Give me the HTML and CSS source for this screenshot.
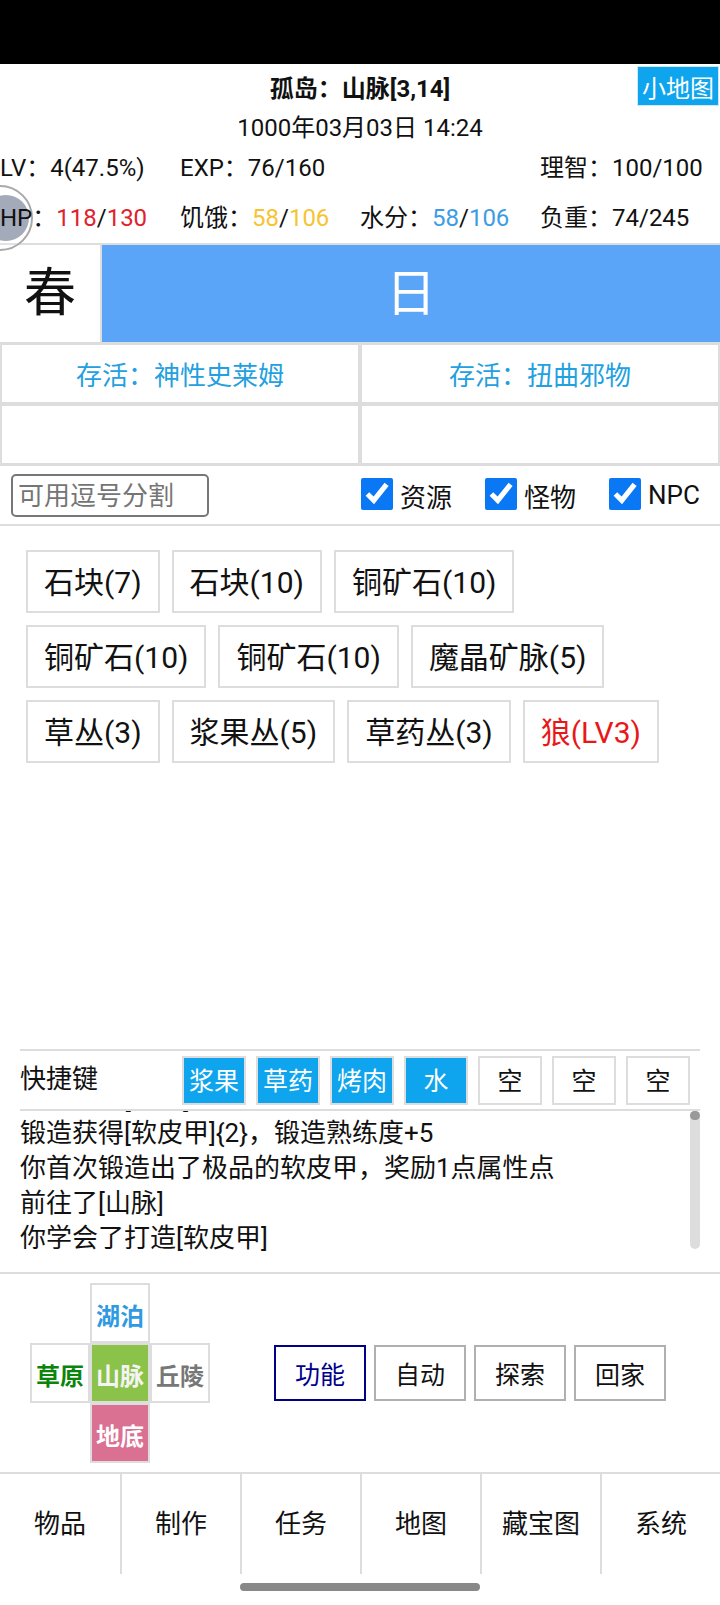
FILE: index.html
```html
<!DOCTYPE html>
<html lang="zh-CN">

<head>
    <meta charset="UTF-8">
    <meta name="viewport" content="width=device-width, initial-scale=1.0">
    <title>孤岛</title>
    <link rel="stylesheet" href="styles.css">
</head>

<body>
    <div class="status-bar"></div>

    <div class="info">
        <div class="float-ball"><div class="float-ball-inner"></div></div>
        <div class="title">孤岛：山脉[3,14]</div>
        <div class="date">1000年03月03日 14:24</div>
        <div class="stats">
            <span>LV：4(47.5%)</span>
            <span>EXP：76/160</span>
            <span></span>
            <span>理智：100/100</span>
        </div>
        <div class="stats">
            <span>HP：<b class="red">118</b>/<b class="red">130</b></span>
            <span>饥饿：<b class="yellow">58</b>/<b class="yellow">106</b></span>
            <span>水分：<b class="blue">58</b>/<b class="blue">106</b></span>
            <span>负重：74/245</span>
        </div>
        <button class="minimap">小地图</button>
    </div>

    <div class="season">
        <div class="season-name">春</div>
        <div class="season-time">日</div>
    </div>

    <div class="quests">
        <div class="quest">存活：神性史莱姆</div>
        <div class="quest">存活：扭曲邪物</div>
        <div class="quest"></div>
        <div class="quest"></div>
    </div>

    <div class="filter">
        <input class="filter-input" type="text" placeholder="可用逗号分割">
        <label class="check check-res"><input type="checkbox" checked>资源</label>
        <label class="check check-mon"><input type="checkbox" checked>怪物</label>
        <label class="check check-npc"><input type="checkbox" checked>NPC</label>
    </div>

    <div class="tags">
        <button class="tag">石块(7)</button>
        <button class="tag">石块(10)</button>
        <button class="tag">铜矿石(10)</button>
        <button class="tag">铜矿石(10)</button>
        <button class="tag">铜矿石(10)</button>
        <button class="tag">魔晶矿脉(5)</button>
        <button class="tag">草丛(3)</button>
        <button class="tag">浆果丛(5)</button>
        <button class="tag">草药丛(3)</button>
        <button class="tag tag-enemy">狼(LV3)</button>
    </div>

    <div class="quick">
        <div class="quick-label">快捷键</div>
        <button class="slot slot-on">浆果</button>
        <button class="slot slot-on">草药</button>
        <button class="slot slot-on">烤肉</button>
        <button class="slot slot-on">水</button>
        <button class="slot">空</button>
        <button class="slot">空</button>
        <button class="slot">空</button>
    </div>

    <div class="log">
        <div class="log-lines">
            <div class="log-old">你获得了[石块]</div>
            <div>锻造获得[软皮甲]{2}，锻造熟练度+5</div>
            <div>你首次锻造出了极品的软皮甲，奖励1点属性点</div>
            <div>前往了[山脉]</div>
            <div>你学会了打造[软皮甲]</div>
        </div>
        <div class="scroll-track"><div class="scroll-thumb"></div></div>
    </div>

    <div class="controls">
        <div class="cross">
            <div class="dir dir-lake">湖泊</div>
            <div class="dir dir-grass">草原</div>
            <div class="dir dir-here">山脉</div>
            <div class="dir dir-hill">丘陵</div>
            <div class="dir dir-under">地底</div>
        </div>
        <div class="actions">
            <button class="action action-on">功能</button>
            <button class="action">自动</button>
            <button class="action">探索</button>
            <button class="action">回家</button>
        </div>
    </div>

    <div class="tabs">
        <div class="tab">物品</div>
        <div class="tab">制作</div>
        <div class="tab">任务</div>
        <div class="tab">地图</div>
        <div class="tab">藏宝图</div>
        <div class="tab">系统</div>
    </div>

    <div class="home-area"><div class="home-pill"></div></div>
</body>

</html>
```

FILE: styles.css
```css
* {
    box-sizing: border-box;
}

html,
body {
    margin: 0;
    padding: 0;
}

body {
    width: 720px;
    height: 1605px;
    overflow: hidden;
    display: flex;
    flex-direction: column;
    background-color: #fff;
    color: #111;
    font-family: Roboto, "Noto Sans CJK SC", sans-serif;
    font-size: 24px;
}

button {
    font-family: inherit;
    padding: 0;
    background-color: #fff;
    color: #111;
}

.status-bar {
    height: 64px;
    background-color: #000;
}

/* top info block */
.info {
    position: relative;
    height: 179px;
}

.title {
    height: 48px;
    line-height: 50px;
    text-align: center;
    font-weight: 700;
}

.date {
    height: 31px;
    line-height: 33px;
    text-align: center;
}

.stats {
    position: relative;
    display: grid;
    grid-template-columns: repeat(4, 180px);
    height: 50px;
    line-height: 51px;
    white-space: nowrap;
}

.stats b {
    font-weight: 400;
}

.red {
    color: #e0222d;
}

.yellow {
    color: #f6c433;
}

.blue {
    color: #3c9de4;
}

.minimap {
    position: absolute;
    top: 2px;
    right: 1px;
    width: 82px;
    height: 40px;
    border: 1px solid #cfe9f7;
    background-color: #0ea5ee;
    color: #fff;
    font-size: 24px;
}

.float-ball {
    position: absolute;
    left: -33px;
    top: 121px;
    width: 66px;
    height: 66px;
    border: 2px solid #a9a9a9;
    border-radius: 50%;
    background-color: rgba(255, 255, 255, 0.2);
}

.float-ball-inner {
    position: absolute;
    left: 14px;
    top: 8px;
    width: 46px;
    height: 46px;
    border-radius: 50%;
    background-color: #a3abba;
}

/* season */
.season {
    display: flex;
    height: 99px;
    border-top: 2px solid #ddd;
}

.season-name {
    width: 102px;
    border-right: 2px solid #ddd;
    line-height: 98px;
    text-align: center;
    font-size: 52px;
}

.season-time {
    flex: 1;
    background-color: #5aa5f8;
    color: #fff;
    line-height: 98px;
    text-align: center;
    font-size: 50px;
}

/* quests */
.quests {
    display: grid;
    grid-template-columns: 356px 356px;
    grid-auto-rows: 57px;
    gap: 4px;
    height: 124px;
    padding: 3px 0 3px 2px;
    background-color: #ddd;
}

.quest {
    background-color: #fff;
    line-height: 62px;
    text-align: center;
    font-size: 26px;
    color: #22a0e0;
}

/* filter row */
.filter {
    display: flex;
    align-items: center;
    height: 60px;
    padding-left: 11px;
    border-bottom: 2px solid #ddd;
    font-size: 26px;
}

.filter-input {
    width: 198px;
    height: 43px;
    padding: 2px 5px 0;
    border: 2px solid #777;
    border-radius: 5px;
    font-family: inherit;
    font-size: 26px;
}

.filter-input::placeholder {
    color: #757575;
}

.check {
    display: flex;
    align-items: center;
    gap: 7px;
}

.check input {
    width: 32px;
    height: 32px;
    margin: 0 0 3px;
    accent-color: #0a78f5;
}

.check-res {
    margin-left: 152px;
}

.check-mon {
    margin-left: 33px;
}

.check-npc {
    margin-left: 33px;
}

/* gathered things */
.tags {
    flex: 1;
    display: flex;
    flex-wrap: wrap;
    align-content: flex-start;
    gap: 12px;
    padding: 24px 26px 0 26px;
}

.tag {
    height: 63px;
    padding: 0 16px 3px;
    border: 2px solid #ddd;
    font-size: 30px;
}

.tag-enemy {
    color: #e81818;
}

/* quick keys */
.quick {
    display: flex;
    align-items: center;
    gap: 10px;
    height: 62px;
    margin: 0 20px;
    padding-right: 10px;
    border-top: 2px solid #ddd;
    border-bottom: 2px solid #ddd;
}

.quick-label {
    width: 152px;
    padding-bottom: 8px;
    font-size: 26px;
}

.slot {
    width: 64px;
    height: 49px;
    padding-bottom: 3px;
    border: 2px solid #ddd;
    font-size: 25px;
}

.slot-on {
    background-color: #0ea5ee;
    color: #fff;
}

/* message log */
.log {
    position: relative;
    display: flex;
    flex-direction: column;
    justify-content: flex-end;
    height: 163px;
    padding: 0 0 16px 20px;
    overflow: hidden;
    border-bottom: 2px solid #ddd;
    font-size: 26px;
    line-height: 35px;
    white-space: nowrap;
}

/* older line, scrolled up so only its foot shows */
.log-old {
    margin-bottom: -1px;
}

.scroll-track {
    position: absolute;
    top: 0;
    left: 690px;
    width: 10px;
    height: 138px;
    border-radius: 5px;
    background-color: #ddd;
}

.scroll-thumb {
    height: 9px;
    border-radius: 5px;
    background-color: #999;
}

/* directions and actions */
.controls {
    display: flex;
    align-items: center;
    height: 198px;
    padding-left: 30px;
}

.cross {
    display: grid;
    grid-template-columns: repeat(3, 60px);
    grid-template-rows: repeat(3, 60px);
}

.dir {
    display: flex;
    align-items: center;
    justify-content: center;
    padding-top: 2px;
    border: 2px solid #ddd;
    font-size: 24px;
    font-weight: 700;
}

.dir-lake {
    grid-column: 2;
    grid-row: 1;
    color: #2f9ae2;
}

.dir-grass {
    grid-column: 1;
    grid-row: 2;
    color: #0b840b;
}

.dir-here {
    grid-column: 2;
    grid-row: 2;
    background-color: #8bc34a;
    color: #f4f4f4;
}

.dir-hill {
    grid-column: 3;
    grid-row: 2;
    color: #777;
}

.dir-under {
    grid-column: 2;
    grid-row: 3;
    background-color: #da7092;
    color: #fff;
}

.actions {
    display: flex;
    gap: 8px;
    margin-left: 64px;
}

.action {
    width: 92px;
    height: 56px;
    border: 2px solid #b0b0b0;
    font-size: 25px;
}

.action-on {
    border-color: #00008b;
    color: #00008b;
}

/* bottom tabs */
.tabs {
    display: grid;
    grid-template-columns: repeat(6, 120px);
    height: 101px;
    border-top: 2px solid #ddd;
}

.tab {
    border-left: 2px solid #ddd;
    line-height: 100px;
    text-align: center;
    font-size: 26px;
}

.tab:first-child {
    border-left: 0;
}

.home-area {
    height: 32px;
    padding-top: 10px;
}

.home-pill {
    width: 240px;
    height: 8px;
    margin: 0 auto;
    border-radius: 4px;
    background-color: #888;
}
```
